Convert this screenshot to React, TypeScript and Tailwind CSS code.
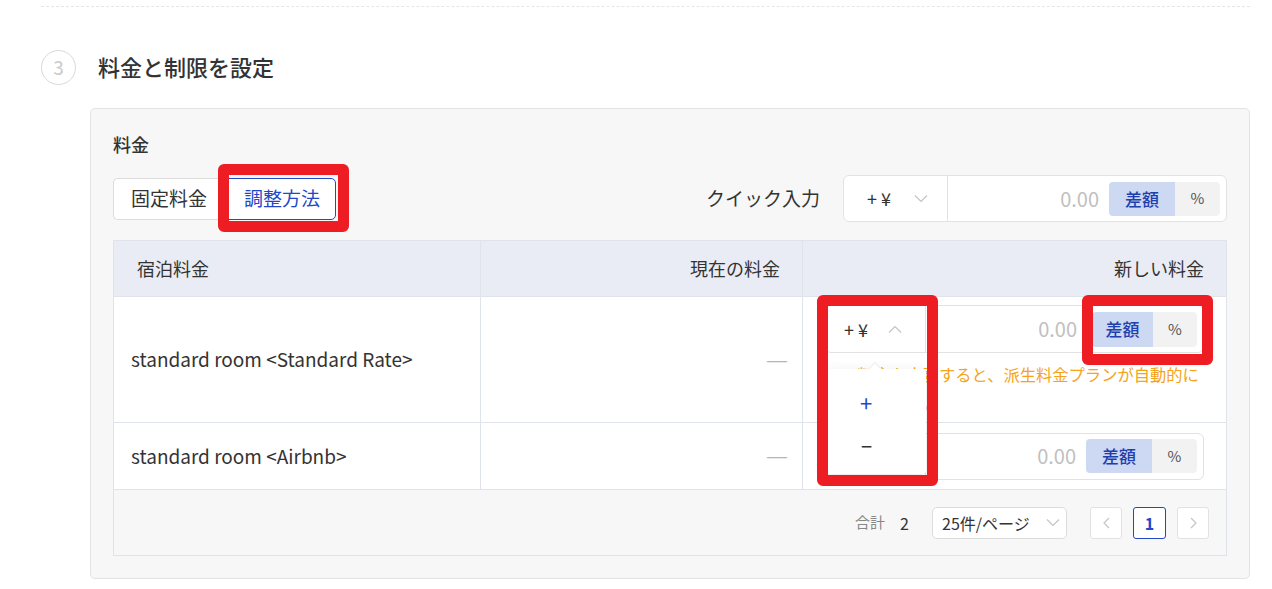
import React from 'react';

const Chevron = ({ up = false, className = '' }: { up?: boolean; className?: string }) => (
  <svg width="14" height="8" viewBox="0 0 14 8" className={className} fill="none">
    <polyline
      points={up ? '1,7.5 7,1.5 13,7.5' : '1,0.5 7,6.5 13,0.5'}
      stroke="#c4c4c4"
      strokeWidth="1.2"
    />
  </svg>
);

const Segment = ({ wide = false }: { wide?: boolean }) => (
  <div className={`flex ${wide ? 'h-[35px]' : 'h-[34px]'} rounded-[4px] overflow-hidden text-[17px]`}>
    <div className={`${wide ? 'w-[61px]' : 'w-[66px]'} bg-[#cdd8f2] text-[#1f3fae] font-medium flex items-center justify-center`}>
      差額
    </div>
    <div className={`${wide ? 'w-[44px]' : 'w-[45px]'} bg-[#f2f2f2] text-[#555] text-[15px] flex items-center justify-center`}>
      %
    </div>
  </div>
);

// row level input: sign select + number + unit switch
const PriceInput = ({ open = false, h = 'h-[48px]' }: { open?: boolean; h?: string }) => (
  <div className={`flex ${h} w-[379px] items-center bg-white border border-[#e2e2e2] rounded-[6px]`}>
    <div className="relative w-[100px] h-full border-r border-[#e2e2e2] flex items-center pl-[18px]">
      <span className="text-[18px] text-[#333]">+ ¥</span>
      <Chevron up={open} className="ml-[20px]" />
    </div>
    <div className="flex-1 text-right pr-[15px] text-[20px] text-[#c0c0c0]">0.00</div>
    <div className="mr-[6px]">
      <Segment wide={open} />
    </div>
  </div>
);

const RedBox = ({ className }: { className: string }) => (
  <div className={`absolute pointer-events-none border-[11px] border-[#ee1d23] rounded-[6px] ${className}`} />
);

export default function App() {
  return (
    <div className="relative w-[1272px] h-[589px] bg-white overflow-hidden font-['Noto_Sans_CJK_JP','Noto_Sans',sans-serif] text-[#333]">
      <div className="ml-[41px] w-[1209px] mt-[6px] border-t border-dashed border-[#e6e6e6]" />

      {/* step header */}
      <div className="flex items-center ml-[41px] mt-[43px]">
        <div className="w-[35px] h-[35px] rounded-full border border-[#d9d9d9] flex items-center justify-center text-[19px] text-[#c9c9c9]">
          3
        </div>
        <div className="ml-[22px] text-[22px] font-medium text-[#333] leading-[30px] -mt-[3px]">料金と制限を設定</div>
      </div>

      {/* panel */}
      <div className="ml-[90px] mt-[23px] w-[1160px] h-[471px] bg-[#f7f7f7] border border-[#e3e3e3] rounded-[5px] px-[22px] pt-[22px]">
        <div className="text-[18px] font-medium leading-[26px] text-[#333]">料金</div>

        <div className="mt-[18px] flex items-center justify-between h-[47px]">
          <div className="flex h-[42px] text-[19px]">
            <div className="w-[115px] bg-white border border-[#dcdcdc] border-r-0 rounded-l-[5px] flex items-center pl-[17px] text-[#333]">
              固定料金
            </div>
            <div className="w-[108px] bg-white border border-[#2247c9] rounded-r-[5px] flex items-center justify-center text-[#2247c9]">
              調整方法
            </div>
          </div>

          <div className="flex items-center">
            <span className="text-[19px] text-[#333] mr-[23px]">クイック入力</span>
            <div className="flex h-[47px] w-[384px] items-center bg-white border border-[#e2e2e2] rounded-[6px]">
              <div className="w-[104px] h-full border-r border-[#e2e2e2] flex items-center pl-[23px]">
                <span className="text-[18px] text-[#333]">+ ¥</span>
                <Chevron className="ml-[23px]" />
              </div>
              <div className="flex-1 text-right pr-[10px] text-[20px] text-[#c0c0c0]">0.00</div>
              <div className="mr-[6px]">
                <Segment />
              </div>
            </div>
          </div>
        </div>

        {/* table */}
        <div className="mt-[18px] w-[1114px] border border-[#dfe3ea] bg-white">
          <div className="grid grid-cols-[367px_322px_423px] h-[56px] bg-[#e9ecf4] text-[18px] text-[#333] border-b border-[#dfe3ea]">
            <div className="flex items-center pl-[23px] border-r border-[#dfe3ea]">宿泊料金</div>
            <div className="flex items-center justify-end pr-[22px] border-r border-[#dfe3ea]">現在の料金</div>
            <div className="flex items-center justify-end pr-[22px]">新しい料金</div>
          </div>

          <div className="grid grid-cols-[367px_322px_423px] h-[126px] border-b border-[#dfe3ea]">
            <div className="flex items-center pl-[17px] text-[19px] border-r border-[#dfe3ea]">standard room &lt;Standard Rate&gt;</div>
            <div className="flex items-center justify-end pr-[15px] font-['Liberation_Sans',sans-serif] text-[20px] text-[#b5b5b5] border-r border-[#dfe3ea]">—</div>
            <div className="relative pl-[22px] pt-[8px]">
              <PriceInput open />
              <div className="mt-[7px] text-[16.3px] leading-[28px] text-[#f5a31a] w-[382px]">
                この料金を変更すると、派生料金プランが自動的に更新されます。
              </div>
              {/* open sign dropdown */}
              <div className="absolute left-[23px] top-[72px] w-[100px] h-[105px] bg-white shadow-[0_4px_14px_rgba(0,0,0,0.12)] rounded-[3px] pt-[12px]">
                <div className="absolute -top-[5px] left-[44px] w-[10px] h-[10px] rotate-45 bg-white border-l border-t border-[#eee]" />
                <div className="h-[43px] flex items-center pl-[34px] text-[22px] text-[#2247c9]">+</div>
                <div className="h-[43px] flex items-center pl-[35px] text-[20px] text-[#333]">−</div>
              </div>
            </div>
          </div>

          <div className="grid grid-cols-[367px_322px_423px] h-[67px] border-b border-[#dfe3ea]">
            <div className="flex items-center pl-[17px] text-[19px] border-r border-[#dfe3ea]">standard room &lt;Airbnb&gt;</div>
            <div className="flex items-center justify-end pr-[15px] font-['Liberation_Sans',sans-serif] text-[20px] text-[#b5b5b5] border-r border-[#dfe3ea]">—</div>
            <div className="flex items-center pl-[22px]">
              <div className="flex h-[47px] w-[379px] items-center bg-white border border-[#e2e2e2] rounded-[6px]">
                <div className="w-[100px] h-full border-r border-[#e2e2e2]" />
                <div className="flex-1 text-right pr-[10px] text-[20px] text-[#c0c0c0]">0.00</div>
                <div className="mr-[6px]">
                  <Segment />
                </div>
              </div>
            </div>
          </div>

          <div className="h-[65px] bg-[#f7f7f7] flex items-center justify-end pr-[17px]">
            <span className="text-[15px] text-[#888]">合計</span>
            <span className="ml-[15px] text-[16px] text-[#333]">2</span>
            <div className="ml-[23px] w-[135px] h-[32px] bg-white border border-[#dcdcdc] rounded-[5px] flex items-center pl-[9px] text-[16px] text-[#333]">
              25件/ページ
              <Chevron className="ml-[16px]" />
            </div>
            <div className="ml-[23px] w-[32px] h-[32px] bg-white border border-[#e2e2e2] rounded-[3px] flex items-center justify-center">
              <svg width="7" height="12" viewBox="0 0 7 12" fill="none"><polyline points="6,1 1,6 6,11" stroke="#c4c4c4" strokeWidth="1.2" /></svg>
            </div>
            <div className="ml-[11px] w-[33px] h-[32px] bg-white border border-[#2247c9] rounded-[3px] flex items-center justify-center text-[16px] font-bold text-[#2247c9]">
              1
            </div>
            <div className="ml-[11px] w-[32px] h-[32px] bg-white border border-[#e2e2e2] rounded-[3px] flex items-center justify-center">
              <svg width="7" height="12" viewBox="0 0 7 12" fill="none"><polyline points="1,1 6,6 1,11" stroke="#c4c4c4" strokeWidth="1.2" /></svg>
            </div>
          </div>
        </div>
      </div>

      {/* annotation boxes */}
      <RedBox className="left-[218px] top-[164px] w-[131px] h-[68px]" />
      <RedBox className="left-[817px] top-[295px] w-[121px] h-[191px]" />
      <RedBox className="left-[1082px] top-[295px] w-[131px] h-[70px]" />
    </div>
  );
}
